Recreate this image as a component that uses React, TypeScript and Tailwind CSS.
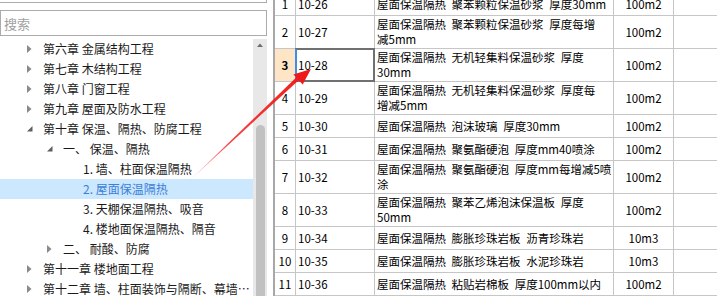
import React from "react";

type TreeItem = {
  level: number;
  state: "open" | "closed" | "leaf";
  text: string;
  active?: boolean;
};

const tree: TreeItem[] = [
  { level: 1, state: "closed", text: "第六章 金属结构工程" },
  { level: 1, state: "closed", text: "第七章 木结构工程" },
  { level: 1, state: "closed", text: "第八章 门窗工程" },
  { level: 1, state: "closed", text: "第九章 屋面及防水工程" },
  { level: 1, state: "open", text: "第十章 保温、隔热、防腐工程" },
  { level: 2, state: "open", text: "一、 保温、隔热" },
  { level: 3, state: "leaf", text: "1. 墙、柱面保温隔热" },
  { level: 3, state: "leaf", text: "2. 屋面保温隔热", active: true },
  { level: 3, state: "leaf", text: "3. 天棚保温隔热、吸音" },
  { level: 3, state: "leaf", text: "4. 楼地面保温隔热、隔音" },
  { level: 2, state: "closed", text: "二、 耐酸、防腐" },
  { level: 1, state: "closed", text: "第十一章 楼地面工程" },
  { level: 1, state: "closed", text: "第十二章 墙、柱面装饰与隔断、幕墙工程" },
];

const rows = [
  { n: 1, code: "10-26", desc: ["屋面保温隔热 聚苯颗粒保温砂浆 厚度30mm"], unit: "100m2" },
  { n: 2, code: "10-27", desc: ["屋面保温隔热 聚苯颗粒保温砂浆 厚度每增", "减5mm"], unit: "100m2" },
  { n: 3, code: "10-28", desc: ["屋面保温隔热 无机轻集料保温砂浆 厚度", "30mm"], unit: "100m2" },
  { n: 4, code: "10-29", desc: ["屋面保温隔热 无机轻集料保温砂浆 厚度每", "增减5mm"], unit: "100m2" },
  { n: 5, code: "10-30", desc: ["屋面保温隔热 泡沫玻璃 厚度30mm"], unit: "100m2" },
  { n: 6, code: "10-31", desc: ["屋面保温隔热 聚氨酯硬泡 厚度mm40喷涂"], unit: "100m2" },
  { n: 7, code: "10-32", desc: ["屋面保温隔热 聚氨酯硬泡 厚度mm每增减5喷", "涂"], unit: "100m2" },
  { n: 8, code: "10-33", desc: ["屋面保温隔热 聚苯乙烯泡沫保温板 厚度", "50mm"], unit: "100m2" },
  { n: 9, code: "10-34", desc: ["屋面保温隔热 膨胀珍珠岩板 沥青珍珠岩"], unit: "10m3" },
  { n: 10, code: "10-35", desc: ["屋面保温隔热 膨胀珍珠岩板 水泥珍珠岩"], unit: "10m3" },
  { n: 11, code: "10-36", desc: ["屋面保温隔热 粘贴岩棉板 厚度100mm以内"], unit: "100m2" },
];

const Toggle = ({ state }: { state: TreeItem["state"] }) => {
  if (state === "leaf") return <span className="w-[16px] shrink-0" />;
  return (
    <span className="w-[16px] shrink-0 flex items-center">
      {state === "closed" ? (
        <svg width="5" height="8" viewBox="0 0 5 8">
          <polygon points="0,0 4.5,4 0,8" fill="#8a8a8a" />
        </svg>
      ) : (
        <svg width="6" height="6" viewBox="0 0 6 6">
          <polygon points="5.5,0 5.5,5.5 0,5.5" fill="#5f5f5f" />
        </svg>
      )}
    </span>
  );
};

function TreePanel() {
  return (
    <div className="w-[267px] h-full flex flex-col shrink-0">
      <div className="h-[3px] border-b border-r border-[#ababab]" />
      <div className="mt-[7px] h-[26px] border border-[#ababab] flex items-center">
        <input
          className="w-full h-full px-[3px] text-[13px] outline-none placeholder:text-[#a0a0a0]"
          placeholder="搜索"
        />
      </div>
      <div className="flex flex-1 mt-[3px] min-h-0">
        <div className="flex-1 overflow-hidden">
          {tree.map((t, i) => {
            const pad =
              t.level === 1 ? "pl-[27px]" : t.level === 2 ? "pl-[47px]" : "pl-[67px]";
            return (
              <div
                key={i}
                className={`h-[20px] flex items-center text-[12px] ${pad} ${
                  t.active ? "bg-[#cce8ff] text-[#3b80d6]" : "text-[#1a1a1a]"
                }`}
              >
                <Toggle state={t.state} />
                <span className="whitespace-nowrap overflow-hidden text-ellipsis pr-[2px]">
                  {t.text}
                </span>
              </div>
            );
          })}
        </div>
        <div className="w-[14px] bg-[#e8e8e8] flex flex-col items-center shrink-0">
          <svg className="mt-[2px]" width="8" height="8" viewBox="0 0 8 8">
            <polygon points="1,6 4,2.5 7,6" fill="#6e6e6e" />
          </svg>
          <div className="mt-[76px] w-[9px] flex-1 bg-[#c1c1c1] rounded-t-full" />
        </div>
      </div>
    </div>
  );
}

function Grid() {
  return (
    <div className="flex-1 h-full overflow-hidden border-l-2 border-[#a8a8a8] ml-[6px]">
      <div className="mt-[-7px] grid grid-cols-[21px_79px_239px_60px_1fr] text-[11.5px] text-black leading-[15px]">
        {rows.map((r) => {
          const h = r.desc.length > 1 ? "h-[33px]" : "h-[23px]";
          const sel = r.n === 3;
          return (
            <React.Fragment key={r.n}>
              <div
                className={`${h} border-r border-b border-[#c6c6c6] flex items-center justify-center ${
                  sel ? "bg-[#fde5c6] font-bold" : ""
                }`}
              >
                {r.n}
              </div>
              <div className={`${h} relative border-r border-b border-[#c6c6c6] flex items-center pl-[2px]`}>
                {r.code}
                {sel && (
                  <div className="absolute left-[-1px] top-[-1px] right-[-1px] bottom-[-1px] border-2 border-[#707070] border-l-[#3c8ee8]" />
                )}
              </div>
              <div className={`${h} border-r border-b border-[#c6c6c6] flex flex-col justify-center pl-[2px] whitespace-nowrap overflow-hidden [word-spacing:3px]`}>
                {r.desc.map((l, i) => (
                  <span key={i} className="h-[15px]">{l}</span>
                ))}
              </div>
              <div className={`${h} border-r border-b border-[#c6c6c6] flex items-center justify-center`}>
                {r.unit}
              </div>
              <div className={`${h} border-b border-[#c6c6c6]`} />
            </React.Fragment>
          );
        })}
      </div>
    </div>
  );
}

export default function App() {
  return (
    <div className="relative w-[717px] h-[296px] overflow-hidden bg-white flex font-['Noto_Sans_CJK_SC',sans-serif]">
      <TreePanel />
      <Grid />
      <svg className="absolute inset-0 pointer-events-none" width="717" height="296" viewBox="0 0 717 296">
        <defs>
          <linearGradient id="arr" x1="187" y1="183" x2="311" y2="69" gradientUnits="userSpaceOnUse">
            <stop offset="0" stopColor="#ff3030" stopOpacity="0.1" />
            <stop offset="0.35" stopColor="#f42020" stopOpacity="0.85" />
            <stop offset="1" stopColor="#ee1a1a" />
          </linearGradient>
        </defs>
        <polygon points="187,183 299.8,79.2 297.2,76.4" fill="url(#arr)" />
        <polygon points="311,69 302.7,84.4 293.4,74.6" fill="#ee1a1a" />
      </svg>
    </div>
  );
}
